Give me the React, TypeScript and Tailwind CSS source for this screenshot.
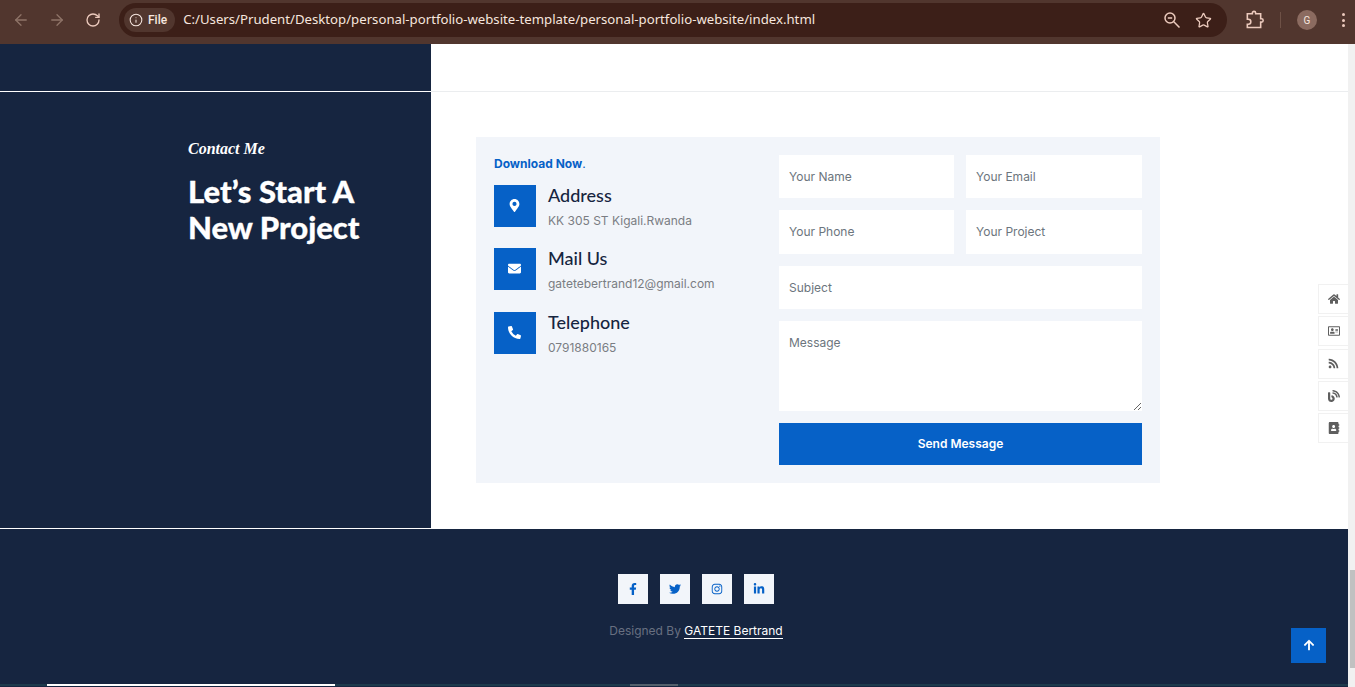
import { ArrowLeft, ArrowRight, Info, RotateCw, Star } from "lucide-react";
import {
  FaAddressBook,
  FaArrowUp,
  FaBlog,
  FaEnvelope,
  FaFacebookF,
  FaHome,
  FaInstagram,
  FaLinkedinIn,
  FaMapMarkerAlt,
  FaPhoneAlt,
  FaRegAddressCard,
  FaRss,
  FaTwitter,
} from "react-icons/fa";

const contacts = [
  { icon: FaMapMarkerAlt, title: "Address", text: "KK 305 ST Kigali.Rwanda", size: 13 },
  { icon: FaEnvelope, title: "Mail Us", text: "gatetebertrand12@gmail.com", size: 13 },
  { icon: FaPhoneAlt, title: "Telephone", text: "0791880165", size: 13 },
];

const sideLinks = [FaHome, FaRegAddressCard, FaRss, FaBlog, FaAddressBook];
const socials = [FaFacebookF, FaTwitter, FaInstagram, FaLinkedinIn];

const fieldClass =
  "h-full w-full bg-white px-[10px] text-[12px] text-[#6c757d] outline-none placeholder:text-[#6c757d]";

function BrowserBar() {
  return (
    <div className="flex h-[44px] shrink-0 items-center bg-[#51362e] pb-[4px] font-['Roboto',sans-serif]">
      <div className="flex w-[119px] items-center pl-[12px] text-[#8f7468]">
        <ArrowLeft size={18} strokeWidth={1.7} />
        <ArrowRight size={18} strokeWidth={1.7} className="ml-[18px]" />
        <RotateCw size={16} strokeWidth={2} className="ml-[19px] text-[#eccabd]" />
      </div>
      <div className="flex h-[34px] w-[1108px] items-center rounded-full bg-[#3c1f18] pl-[5px] pr-[15px]">
        <div className="flex h-[24px] items-center gap-[5px] rounded-full bg-[#51362e] pl-[5px] pr-[8px] text-[12px] font-medium text-[#f6e6df]">
          <Info size={14} strokeWidth={1.8} />
          File
        </div>
        <span className="ml-[8px] font-['Noto_Sans',sans-serif] text-[13.2px] text-[#f6e6df]">
          C:/Users/Prudent/Desktop/personal-portfolio-website-template/personal-portfolio-website/index.html
        </span>
        <svg
          width="18"
          height="18"
          viewBox="0 0 18 18"
          fill="none"
          stroke="#eccabd"
          strokeWidth="1.5"
          className="ml-auto"
        >
          <circle cx="7" cy="7" r="5" />
          <path d="M4.8 7h4.4M10.8 10.8L16.5 16.5" />
        </svg>
        <Star size={17} strokeWidth={1.8} className="ml-[14px] text-[#eccabd]" />
      </div>
      <svg
        width="20"
        height="20"
        viewBox="0 0 24 24"
        fill="none"
        stroke="#eccabd"
        strokeWidth="1.9"
        className="ml-[17px]"
      >
        <path d="M4 4.5h6V3.6a2 2 0 0 1 4 0v.9h6v6h1a2 2 0 0 1 0 4h-1V21H4v-4h1.2a3 3 0 0 0 0-6H4V4.5z" />
      </svg>
      <div className="ml-[16px] h-[16px] w-px bg-[#6e5146]" />
      <div className="ml-[16px] flex h-[20px] w-[20px] items-center justify-center rounded-full bg-[#8b6b60] text-[10px] text-[#f6e6df]">
        G
      </div>
      <div className="ml-[25px] flex flex-col gap-[2.5px]">
        <span className="h-[3px] w-[3px] rounded-full bg-[#eccabd]" />
        <span className="h-[3px] w-[3px] rounded-full bg-[#eccabd]" />
        <span className="h-[3px] w-[3px] rounded-full bg-[#eccabd]" />
      </div>
    </div>
  );
}

function ContactSection() {
  return (
    <div className="flex h-[436px] shrink-0">
      <div className="w-[431px] shrink-0 pl-[188px] pt-[45px]">
        <div className="font-['Liberation_Serif',serif] text-[16px] font-bold italic leading-[24px] text-white">
          Contact Me
        </div>
        <h2 className="mt-[12px] font-['Lato',sans-serif] text-[31px] font-black leading-[36px] text-white [-webkit-text-stroke:0.3px_white]">
          Let’s Start A
          <br />
          New Project
        </h2>
      </div>
      <div className="flex-1 bg-white pl-[45px] pt-[45px]">
        <div className="flex h-[346px] w-[684px] bg-[#f2f5fa] p-[18px]">
          <div className="w-[285px] shrink-0">
            <div className="text-[12px] font-bold leading-[18px] text-[#0661c7]">
              Download Now<span className="font-normal">.</span>
            </div>
            <div className="mt-[12px] flex flex-col gap-[21px]">
              {contacts.map((c) => (
                <div key={c.title} className="flex h-[42px] gap-[12px] last:mt-px">
                  <div className="flex h-[42px] w-[42px] shrink-0 items-center justify-center bg-[#0661c7] pb-[2px] pr-[2px] text-white">
                    <c.icon size={c.size} />
                  </div>
                  <div className="-mt-[2px]">
                    <div className="font-['Lato',sans-serif] text-[18px] font-medium leading-[24px] text-[#162540]">
                      {c.title}
                    </div>
                    <div className="mt-[5px] text-[12px] leading-[18px] text-[#7a7d83]">{c.text}</div>
                  </div>
                </div>
              ))}
            </div>
          </div>
          <div className="flex w-[363px] flex-col gap-[12px]">
            <div className="grid h-[43px] grid-cols-[175px_176px] gap-[12px]">
              <input className={fieldClass} placeholder="Your Name" />
              <input className={fieldClass} placeholder="Your Email" />
            </div>
            <div className="grid h-[44px] grid-cols-[175px_176px] gap-[12px]">
              <input className={`${fieldClass} pb-[2px]`} placeholder="Your Phone" />
              <input className={`${fieldClass} pb-[2px]`} placeholder="Your Project" />
            </div>
            <div className="h-[43px]">
              <input className={fieldClass} placeholder="Subject" />
            </div>
            <textarea
              className="block h-[90px] w-full bg-white px-[10px] py-[13px] text-[12px] leading-[18px] text-[#6c757d] outline-none placeholder:text-[#6c757d]"
              placeholder="Message"
            />
            <button className="h-[42px] w-full bg-[#0661c7] text-[12px] font-semibold text-white">
              Send Message
            </button>
          </div>
        </div>
      </div>
    </div>
  );
}

function Footer() {
  return (
    <div className="flex h-[156px] shrink-0 flex-col items-center border-t border-white pl-[44px] pt-[45px]">
      <div className="flex gap-[12px]">
        {socials.map((Icon, i) => (
          <div key={i} className="flex h-[30px] w-[30px] items-center justify-center bg-[#f2f5fa] text-[#0661c7]">
            <Icon size={12} />
          </div>
        ))}
      </div>
      <div className="mt-[17px] text-[12px] leading-[20px] text-[#687080]">
        Designed By{" "}
        <span className="border-b border-white text-white">GATETE Bertrand</span>
      </div>
    </div>
  );
}

export default function App() {
  return (
    <div className="relative flex h-[687px] w-[1355px] flex-col overflow-hidden bg-[#162540] font-['Inter',sans-serif]">
      <BrowserBar />
      <div className="flex min-h-0 flex-1">
        <div className="flex w-[1348px] flex-col">
          <div className="flex h-[47px] shrink-0">
            <div className="w-[431px] shrink-0" />
            <div className="flex-1 bg-white" />
          </div>
          <div className="flex h-px shrink-0">
            <div className="w-[431px] shrink-0 bg-white" />
            <div className="flex-1 bg-[#ebedef]" />
          </div>
          <ContactSection />
          <Footer />
          <div className="flex h-[2px] shrink-0 bg-[#1d3a4c]">
            <div className="ml-[47px] h-full w-[288px] bg-white" />
            <div className="ml-[295px] h-full w-[48px] bg-[#53606c]" />
          </div>
        </div>
        <div className="relative w-[7px] shrink-0 bg-[#f1f1f1]">
          <div className="absolute left-[2px] top-[526px] h-[98px] w-[5px] bg-[#c1c1c1]" />
        </div>
      </div>

      <div className="absolute right-[7px] top-[284px] flex flex-col gap-[2.25px]">
        {sideLinks.map((Icon, i) => (
          <div
            key={i}
            className="flex h-[30px] w-[30px] items-center justify-center border border-r-0 border-[#f1f1f1] bg-white text-[#5f5f5f]"
          >
            <Icon size={i === 2 ? 11 : 12} />
          </div>
        ))}
      </div>
      <div className="absolute left-[1291px] top-[628px] flex h-[35px] w-[35px] items-center justify-center bg-[#0661c7] pb-[2px] text-white">
        <FaArrowUp size={12} />
      </div>
    </div>
  );
}
